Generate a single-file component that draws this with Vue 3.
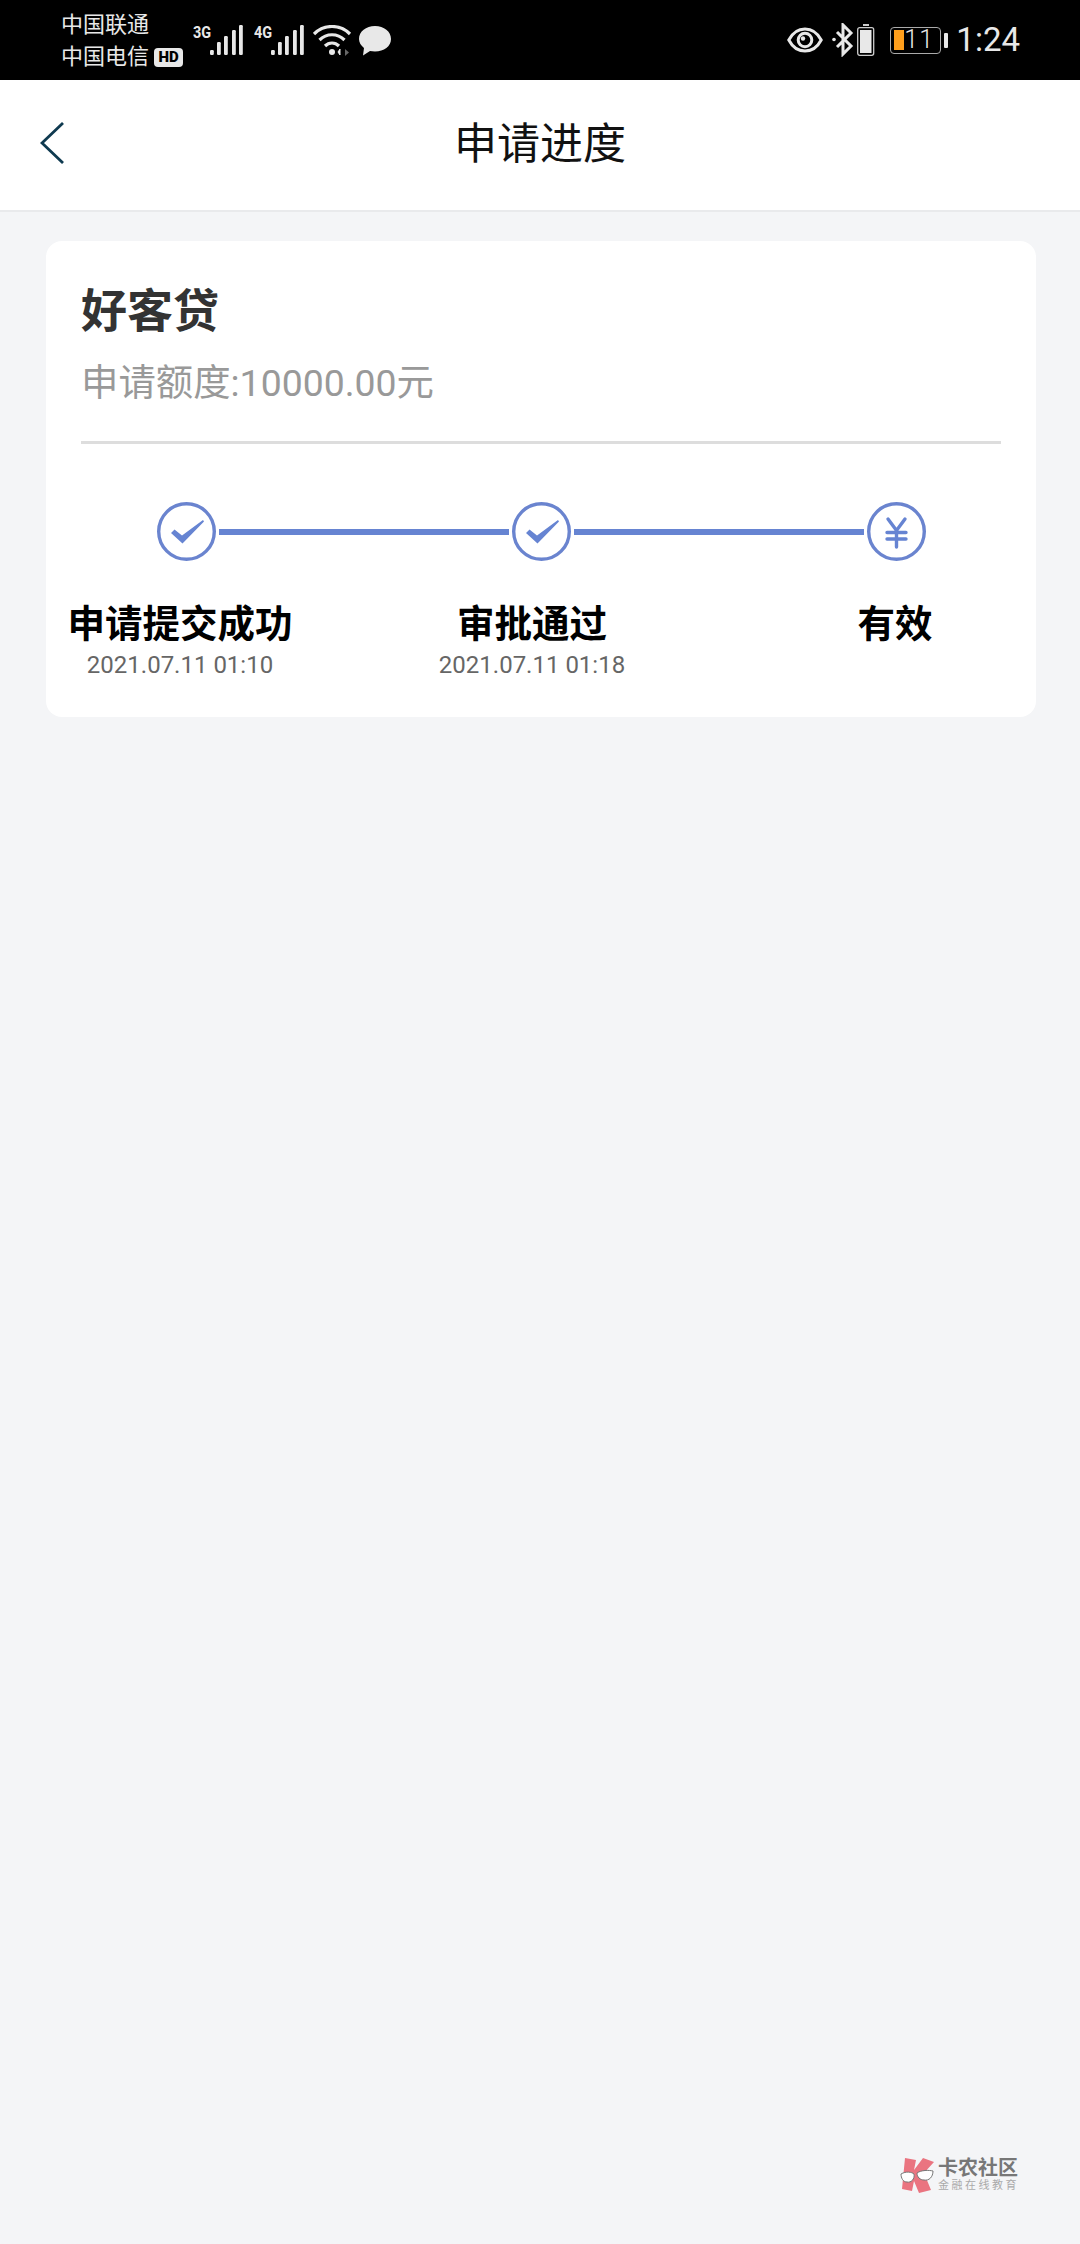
<script setup>
const steps = [
  { label: '申请提交成功', date: '2021.07.11 01:10' },
  { label: '审批通过', date: '2021.07.11 01:18' },
  { label: '有效', date: '' }
]
const bars = [
  { x: 17, y: 25, h: 5 },
  { x: 24, y: 17, h: 13 },
  { x: 31, y: 11, h: 19 },
  { x: 39, y: 5, h: 25 },
  { x: 46, y: 0, h: 30 }
]
</script>

<template>
  <div class="page">
    <header class="status">
      <div class="carriers">
        <div>中国联通</div>
        <div class="carrier2">中国电信<span class="hd">HD</span></div>
      </div>
      <div class="signal sig1">
        <span class="net">3G</span>
        <svg width="50" height="32" viewBox="0 0 50 32"><rect v-for="b in bars" :key="b.x" :x="b.x" :y="b.y" width="3.800" :height="b.h" rx="1.200" fill="#e8e8e8" /></svg>
      </div>
      <div class="signal sig2">
        <span class="net">4G</span>
        <svg width="50" height="32" viewBox="0 0 50 32"><rect v-for="b in bars" :key="b.x" :x="b.x" :y="b.y" width="3.800" :height="b.h" rx="1.200" fill="#e8e8e8" /></svg>
      </div>
      <svg class="wifi" width="40" height="32" viewBox="0 0 40 32" fill="none" stroke="#e8e8e8" stroke-width="3.200">
        <path d="M1 9C11 -1 27 -1 37 9" />
        <path d="M6.500 15C13.500 8 24.500 8 31.500 15" />
        <path d="M12 21C16 17 22 17 26 21" />
        <circle cx="19" cy="27" r="3" fill="#e8e8e8" stroke="none" />
        <path d="M27 24V30L25 27Z" fill="#e8e8e8" stroke-width="1" />
        <path d="M32 24L36 27.500L32 31Z" fill="#666" stroke="none" />
      </svg>
      <svg class="bubble" width="34" height="32" viewBox="0 0 34 32"><path d="M17 1C26 1 33 6.500 33 14C33 21.500 26 26.500 17 26.500C15 26.500 13.500 26.300 12 26L5 30.500L6 23C3 20.500 1 17.500 1 14C1 6.500 8 1 17 1Z" fill="#e8e8e8" /></svg>

      <div class="status-right">
        <svg width="36" height="26" viewBox="0 0 36 26" fill="none" stroke="#e8e8e8" stroke-width="3">
          <path d="M1.800 13C6 5 11.500 2 18 2C24.500 2 30 5 34.200 13C30 21 24.500 24 18 24C11.500 24 6 21 1.800 13Z" />
          <circle cx="18" cy="13" r="6.800" />
          <circle cx="16" cy="11.500" r="2.200" fill="#e8e8e8" stroke="none" />
        </svg>
        <svg class="bt" width="22" height="34" viewBox="0 0 22 34" fill="none" stroke="#e8e8e8" stroke-width="3">
          <path d="M5 9L19 23L11 31V2L19 10L5 24" />
          <circle cx="2" cy="16.500" r="1.800" fill="#e8e8e8" stroke="none" />
        </svg>
        <svg class="small-bat" width="18" height="32" viewBox="0 0 18 32">
          <rect x="6" y="0" width="6" height="2" fill="#ccc" />
          <rect x="0.700" y="3.700" width="16" height="27.600" rx="2" fill="none" stroke="#ccc" stroke-width="1.300" />
          <rect x="3" y="6" width="11.500" height="23" fill="#e8e8e8" />
        </svg>
        <div class="big-bat">
          <span class="bat-fill"></span>
          <span class="bat-num">11</span>
        </div>
        <span class="bat-nub"></span>
        <span class="time">1:24</span>
      </div>
    </header>

    <nav class="nav">
      <svg class="back" width="24" height="42" viewBox="0 0 24 42" fill="none" stroke="#0f3a50" stroke-width="2.800">
        <path d="M23 1L2 21L23 41" />
      </svg>
      <h1 class="nav-title">申请进度</h1>
    </nav>

    <main class="card">
      <h2 class="title">好客贷</h2>
      <p class="sub">申请额度:10000.00元</p>
      <div class="divider"></div>

      <div class="track">
        <svg class="node" width="59" height="59" viewBox="0 0 59 59">
          <circle cx="29.500" cy="29.500" r="27.800" fill="none" stroke="#6a84cf" stroke-width="3.400" />
          <path d="M14 31L17.500 27.500L25 33.500L46 18L47 19.500L25.500 41.500Z" fill="#6684d2" />
        </svg>
        <span class="link"></span>
        <svg class="node" width="59" height="59" viewBox="0 0 59 59">
          <circle cx="29.500" cy="29.500" r="27.800" fill="none" stroke="#6a84cf" stroke-width="3.400" />
          <path d="M14 31L17.500 27.500L25 33.500L46 18L47 19.500L25.500 41.500Z" fill="#6684d2" />
        </svg>
        <span class="link"></span>
        <svg class="node" width="59" height="59" viewBox="0 0 59 59" fill="none">
          <circle cx="29.500" cy="29.500" r="27.800" stroke="#6a84cf" stroke-width="3.400" />
          <path d="M21 17L29.500 28.500L38 17M20 30.500H39M20 37H39M29.500 28.500V45" stroke="#6684d2" stroke-width="3.400" stroke-linecap="round" />
        </svg>
      </div>

      <div class="labels">
        <div v-for="s in steps" :key="s.label" class="step">
          <div class="step-label">{{ s.label }}</div>
          <div class="step-date">{{ s.date }}</div>
        </div>
      </div>
    </main>

    <footer class="logo">
      <svg width="36" height="36" viewBox="0 0 36 36">
        <path d="M6 1L17 3L15 13L24 1L35 5L25 16L32 33L20 36L15 24L13 34L3 32Z" fill="#ea7480" />
        <g fill="#fff" stroke="#777" stroke-width="1">
          <path d="M2 17C7 14 13 15 15 17C16 22 12 26 8 25C4 25 2 21 2 17Z" />
          <path d="M18 16C22 13 30 13 34 14C34 20 30 24 25 23C21 23 18 20 18 16Z" />
        </g>
      </svg>
      <div class="logo-text">
        <div class="logo-main">卡农社区</div>
        <div class="logo-sub">金融在线教育</div>
      </div>
    </footer>
  </div>
</template>

<style>
html, body { margin: 0; padding: 0; background: #f4f5f7; }
</style>

<style scoped>
.page {
  width: 1080px;
  height: 2244px;
  display: flex;
  flex-direction: column;
  background: #f4f5f7;
  font-family: Roboto, "Noto Sans CJK SC", sans-serif;
  overflow: hidden;
}
.status {
  height: 80px;
  background: #000;
  color: #e8e8e8;
  display: flex;
  align-items: flex-start;
  padding-left: 61px;
  box-sizing: border-box;
}
.carriers {
  width: 129px;
  padding-top: 9px;
  font-size: 22px;
  line-height: 32px;
  white-space: nowrap;
}
.carrier2 { display: flex; align-items: center; }
.hd {
  margin-left: 5px;
  width: 29px;
  height: 19px;
  border-radius: 4px;
  background: #e8e8e8;
  color: #000;
  font-size: 15px;
  font-weight: 900;
  line-height: 19px;
  text-align: center;
}
.signal { position: relative; width: 50px; height: 32px; margin-top: 25px; }
.signal svg { display: block; }
.sig1 { margin-left: 3px; }
.sig2 { margin-left: 11px; }
.net {
  position: absolute;
  left: 0;
  top: -2px;
  font-size: 17px;
  font-weight: 700;
  letter-spacing: 0;
  line-height: 18px;
  transform: scaleX(0.850);
  transform-origin: left;
}
.wifi { margin: 25px 0 0 9px; }
.bubble { margin: 25px 0 0 5px; }
.status-right {
  margin-left: auto;
  height: 80px;
  display: flex;
  align-items: center;
  padding-right: 60px;
}
.bt { margin-left: 9px; }
.small-bat { margin-left: 3px; }
.big-bat {
  margin-left: 15px;
  width: 51px;
  height: 27px;
  box-sizing: border-box;
  border: 1.500px solid #aaa;
  border-radius: 4px;
  display: flex;
  align-items: center;
  padding-left: 3px;
}
.bat-fill { width: 10px; height: 20px; background: #ff9f1c; }
.bat-num { font-size: 25px; font-weight: 300; line-height: 24px; letter-spacing: 1px; }
.bat-nub { width: 4px; height: 15px; margin-left: 3px; background: #e8e8e8; border-radius: 1px; }
.time { margin-left: 8px; font-size: 33px; font-weight: 400; line-height: 40px; }

.nav {
  height: 132px;
  background: #fff;
  box-sizing: border-box;
  border-bottom: 2px solid #e9eaec;
  position: relative;
  display: flex;
  align-items: center;
  justify-content: center;
}
.back { position: absolute; left: 40px; top: 42px; }
.nav-title { margin: 0 0 2px; font-size: 43px; font-weight: 400; color: #111; line-height: 56px; }

.card {
  margin: 29px 0 0 46px;
  width: 990px;
  box-sizing: border-box;
  padding: 40px 0 37px;
  background: #fff;
  border-radius: 16px;
}
.title { margin: 0 0 0 35px; font-size: 46px; font-weight: 700; line-height: 60px; color: #333; }
.sub { margin: 17px 0 0 35px; font-size: 37.400px; line-height: 50px; color: #999; }
.divider { margin: 33px 0 0 35px; width: 920px; height: 3px; background: #ddd; }
.track {
  margin: 58px 0 0 111px;
  width: 769px;
  display: flex;
  align-items: center;
  gap: 3px;
}
.node { flex: none; display: block; }
.link { flex: 1; height: 6px; background: #6684d2; }
.labels {
  margin-top: 41px;
  display: grid;
  grid-template-columns: 268px 436px 286px;
}
.step { text-align: center; min-width: 0; white-space: nowrap; }
.step:last-child { padding-left: 4px; }
.step-label { font-size: 37.500px; font-weight: 700; line-height: 44px; color: #000; }
.step-date { margin-top: 4px; height: 30px; font-size: 24px; line-height: 30px; color: #666; }

.logo {
  margin: auto 0 51px 899px;
  display: flex;
  align-items: center;
  gap: 3px;
}
.logo-text { display: flex; flex-direction: column; }
.logo-main { font-size: 20px; font-weight: 700; line-height: 22px; color: #777; }
.logo-sub { font-size: 11px; line-height: 14px; letter-spacing: 2.500px; color: #aaa; white-space: nowrap; }
</style>
